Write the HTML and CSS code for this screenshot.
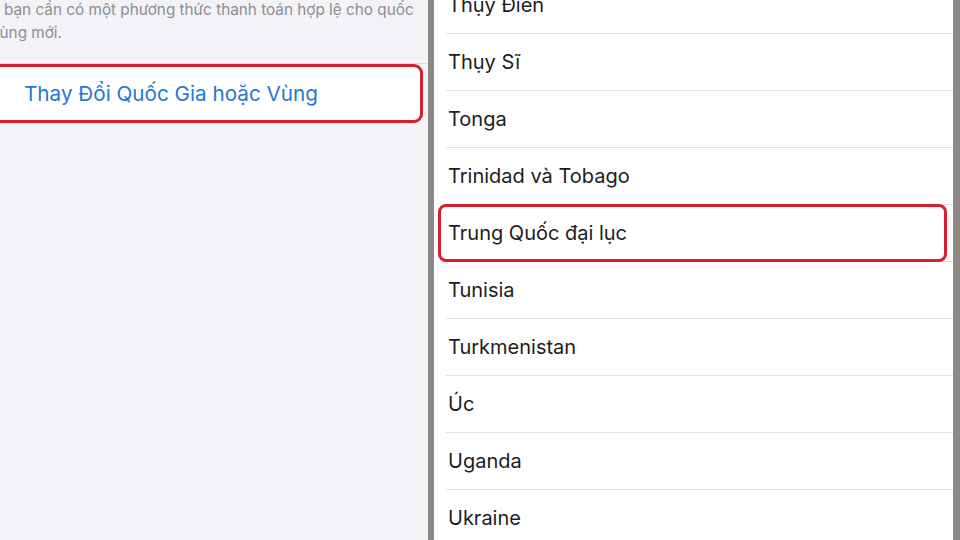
FILE: index.html
```html
<!DOCTYPE html>
<html lang="vi">
<head>
<meta charset="utf-8">
<link rel="stylesheet" href="styles.css">
</head>
<body>
<div class="screen">
  <div class="left">
    <div class="note">
      <div class="line1">bạn cần có một phương thức thanh toán hợp lệ cho quốc</div>
      <div class="line2">Vùng mới.</div>
    </div>
    <div class="sep"></div>
    <div class="cell">Thay Đổi Quốc Gia hoặc Vùng</div>
  </div>
  <div class="divider"></div>
  <div class="right">
    <ul class="list">
      <li class="row">Thụy Điển</li>
      <li class="row">Thụy Sĩ</li>
      <li class="row">Tonga</li>
      <li class="row">Trinidad và Tobago</li>
      <li class="row marked">Trung Quốc đại lục</li>
      <li class="row">Tunisia</li>
      <li class="row">Turkmenistan</li>
      <li class="row">Úc</li>
      <li class="row">Uganda</li>
      <li class="row">Ukraine</li>
    </ul>
  </div>
  <div class="edge"></div>
</div>
</body>
</html>
```
FILE: styles.css
```css
html, body {
  margin: 0;
  padding: 0;
}
body {
  width: 960px;
  height: 540px;
  overflow: hidden;
  font-family: Inter, "Noto Sans", "DejaVu Sans", sans-serif;
}
.screen {
  display: flex;
  width: 960px;
  height: 540px;
}
.left {
  width: 428px;
  background: #f2f2f7;
  overflow: hidden;
  flex: none;
}
.note {
  color: #8e8e93;
  font-size: 15.3px;
  line-height: 23px;
}
.line1 {
  margin-top: -2px;
  padding-left: 4px;
  white-space: nowrap;
}
.line2 {
  margin-left: -11px;
  white-space: nowrap;
}
.sep {
  height: 1px;
  background: #dcdce0;
  margin-top: 19px;
}
.cell {
  box-sizing: border-box;
  height: 59px;
  margin-left: -12px;
  margin-right: 5px;
  background: #fff;
  border: 3px solid #d81f30;
  border-radius: 9px;
  padding-left: 33px;
  display: flex;
  align-items: center;
  color: #1f78d6;
  font-size: 20.7px;
}
.divider {
  width: 6px;
  background: #8d8886;
  flex: none;
}
.right {
  width: 519px;
  background: #fff;
  overflow: hidden;
  flex: none;
}
.list {
  list-style: none;
  margin: -23px 0 0 0;
  padding: 0 0 0 12px;
}
.row {
  position: relative;
  box-sizing: border-box;
  height: 57px;
  border-bottom: 1px solid #e0e0e3;
  display: flex;
  align-items: center;
  padding-left: 2px;
  color: #1c1c1e;
  font-size: 20px;
}
.row.marked::after {
  content: "";
  position: absolute;
  left: -8px;
  right: 6px;
  top: -1px;
  bottom: -1px;
  border: 3px solid #d81f30;
  border-radius: 8px;
}
.edge {
  flex: 1;
  background: #8d8886;
}
```
